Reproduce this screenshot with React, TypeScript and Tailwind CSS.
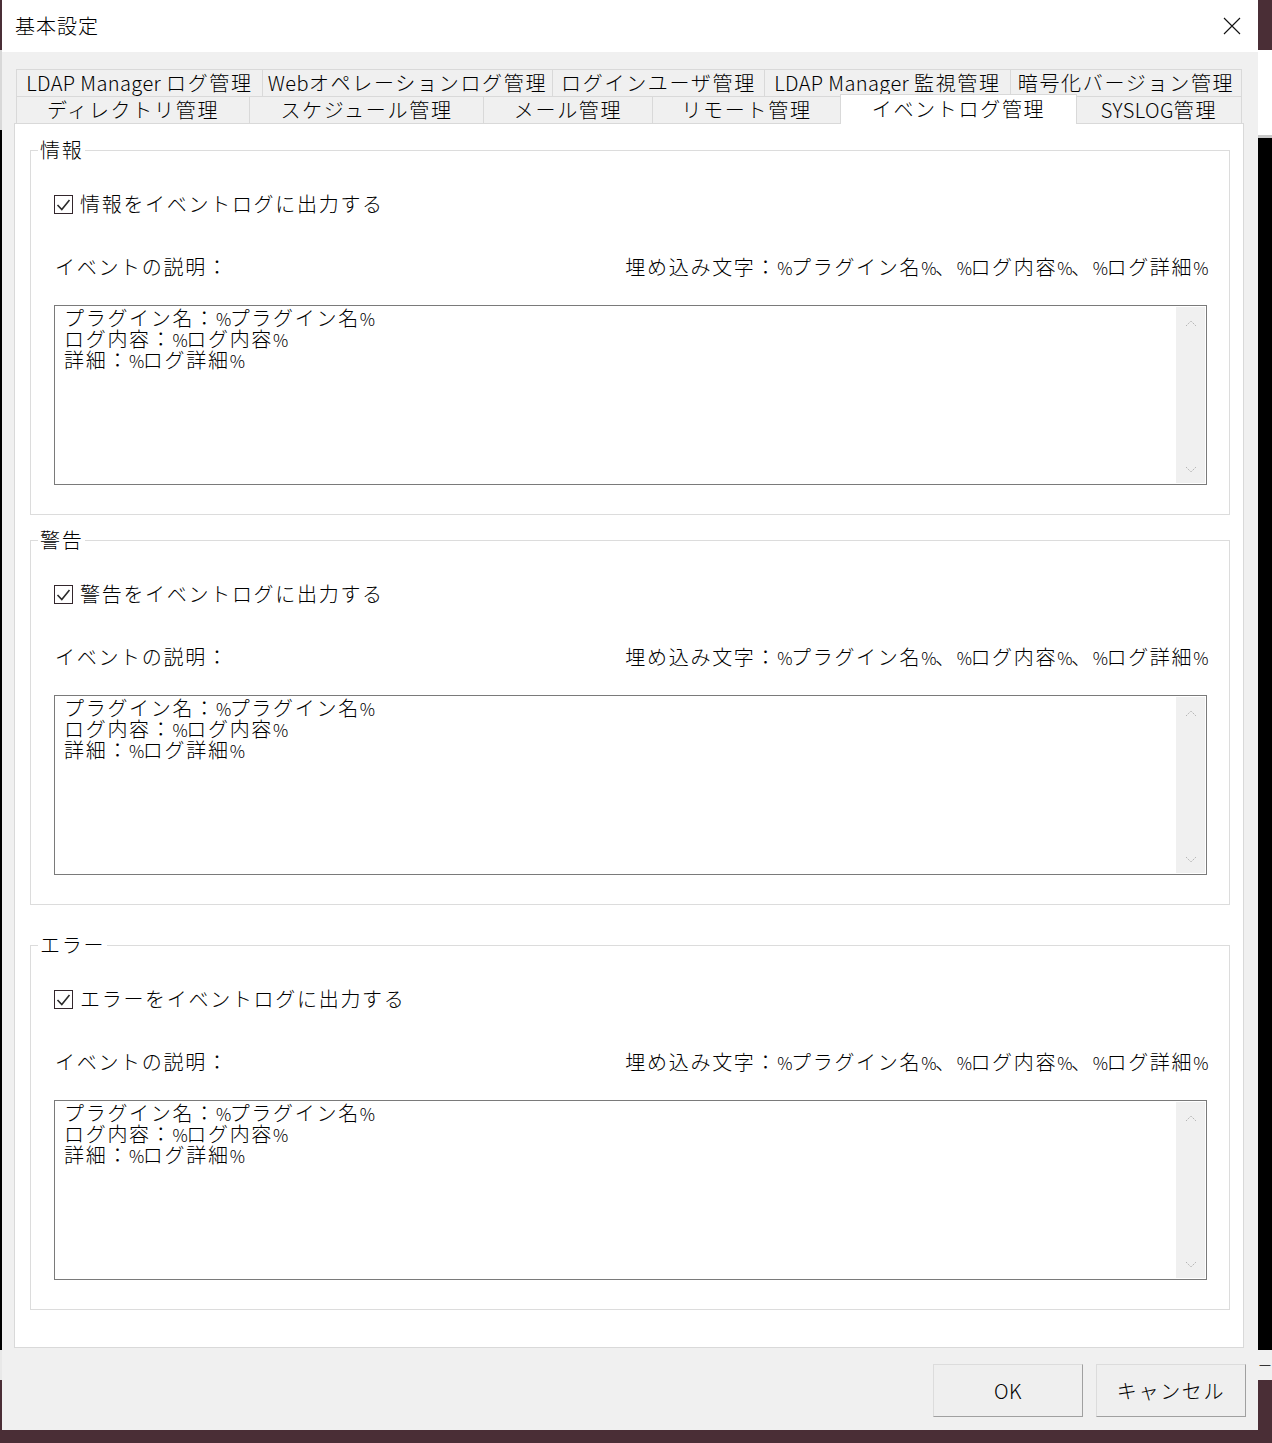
import React from "react";

const ASCII = /([\x20-\x7e]+)/;

// half-width runs: tighter spacing than the full-width glyphs; % is drawn narrow like the dialog font
function T({ s }: { s: string }) {
  return (
    <>
      {s.split(ASCII).map((p, i) =>
        i % 2 === 1 ? (
          <span key={i} className="tracking-[0.4px] whitespace-pre">
            {p.split(/(%)/).map((q, j) =>
              q === "%" ? (
                <span key={j} className="text-[17px] leading-none tracking-[-1.5px]">
                  %
                </span>
              ) : (
                q
              )
            )}
          </span>
        ) : (
          p
        )
      )}
    </>
  );
}

const row1: [string, number][] = [
  ["LDAP Manager ログ管理", 246],
  ["Webオペレーションログ管理", 290],
  ["ログインユーザ管理", 212],
  ["LDAP Manager 監視管理", 246],
  ["暗号化バージョン管理", 232],
];

const row2: [string, number][] = [
  ["ディレクトリ管理", 233],
  ["スケジュール管理", 234],
  ["メール管理", 169],
  ["リモート管理", 188],
  ["イベントログ管理", 237],
  ["SYSLOG管理", 165],
];

const groups = [
  { title: "情報", label: "情報をイベントログに出力する", mt: "mt-0" },
  { title: "警告", label: "警告をイベントログに出力する", mt: "mt-[13px]" },
  { title: "エラー", label: "エラーをイベントログに出力する", mt: "mt-[28px]" },
];

const lines = ["プラグイン名：%プラグイン名%", "ログ内容：%ログ内容%", "詳細：%ログ詳細%"];

function CheckBox() {
  return (
    <div className="w-[19px] h-[19px] border border-[#33262c] bg-white shrink-0">
      <svg width="17" height="17" viewBox="0 0 17 17">
        <path d="M2.5 9 L6.8 13.5 L14.5 4" fill="none" stroke="#2a2a2a" strokeWidth="1.6" />
      </svg>
    </div>
  );
}

function Group({ title, label, mt }: { title: string; label: string; mt: string }) {
  return (
    <fieldset className={`${mt} w-[1200px] border border-[#dcdcdc]`}>
      <legend className="ml-[7px] px-[2px] leading-[24px]">{title}</legend>
      <div className="pt-[32px] pl-[23px] pr-[22px] pb-[29px]">
        <div className="flex items-center gap-[7px] h-[20px]">
          <CheckBox />
          <span className="leading-[20px]">{label}</span>
        </div>
        <div className="mt-[41px] h-[24px] leading-[24px] flex justify-between pl-[1px]">
          <span>イベントの説明：</span>
          <span>
            <T s="埋め込み文字：%プラグイン名%、%ログ内容%、%ログ詳細%" />
          </span>
        </div>
        <div className="mt-[26px] h-[180px] border border-[#7a7a7a] bg-white flex">
          <div className="flex-1 pl-[9px] pt-[1px] leading-[21px]">
            {lines.map((l) => (
              <div key={l}>
                <T s={l} />
              </div>
            ))}
          </div>
          <div className="w-[29px] my-[1px] mr-[1px] bg-[#f0f0f0] flex flex-col items-center justify-between pt-[12px] pb-[9px]">
            <svg width="12" height="8" viewBox="0 0 12 8">
              <path d="M1 7 L6 2 L11 7" fill="none" stroke="#b4b4b4" strokeWidth="1" strokeDasharray="1.5 1" />
            </svg>
            <svg width="12" height="8" viewBox="0 0 12 8">
              <path d="M1 1 L6 6 L11 1" fill="none" stroke="#b4b4b4" strokeWidth="1" strokeDasharray="1.5 1" />
            </svg>
          </div>
        </div>
      </div>
    </fieldset>
  );
}

export default function App() {
  return (
    <div className="w-[1272px] h-[1443px] bg-[#4a2e36] flex items-start overflow-hidden text-black text-[20px] font-light tracking-[1.7px] font-['Noto_Sans_CJK_JP',sans-serif]">
      {/* left edge of the desktop behind */}
      <div className="w-[2px] shrink-0 flex flex-col">
        <div className="h-[50px] bg-[#4a2e36]" />
        <div className="h-[80px] bg-[#d8d8d8]" />
        <div className="h-[1220px] bg-black" />
        <div className="h-[30px] bg-[#e8e8e8]" />
      </div>

      {/* dialog */}
      <div className="w-[1256px] h-[1430px] shrink-0 bg-[#f0f0f0] flex flex-col">
        <div className="h-[52px] bg-white flex items-center justify-between pl-[13px] pr-[17px]">
          <span className="tracking-[1px]">基本設定</span>
          <svg width="18" height="18" viewBox="0 0 18 18">
            <path d="M1 1 L17 17 M17 1 L1 17" stroke="#111" strokeWidth="1.1" />
          </svg>
        </div>

        <div className="pt-[17px] pl-[14px] flex flex-col">
          <div className="flex h-[27px]">
            {row1.map(([t, w], i) => (
              <div
                key={t}
                style={{ width: w }}
                className={`h-[27px] bg-[#f0f0f0] border-t border-l border-[#d9d9d9] ${i === row1.length - 1 ? "border-r" : ""} text-center leading-[26px] whitespace-nowrap`}
              >
                <T s={t} />
              </div>
            ))}
          </div>
          <div className="flex h-[27px]">
            {row2.map(([t, w], i) =>
              i === 4 ? (
                <div
                  key={t}
                  style={{ width: w }}
                  className="relative z-10 -mt-[2px] h-[30px] bg-white border-t border-l border-r border-[#d9d9d9] text-center leading-[28px] whitespace-nowrap"
                >
                  <T s={t} />
                </div>
              ) : (
                <div
                  key={t}
                  style={{ width: w }}
                  className={`h-[27px] bg-[#f0f0f0] border-t border-[#d9d9d9] ${i === 5 ? "border-r" : "border-l"} text-center leading-[26px] whitespace-nowrap`}
                >
                  <T s={t} />
                </div>
              )
            )}
          </div>
        </div>

        <div className="ml-[12px] w-[1230px] bg-white border border-[#d9d9d9] pt-[14px] pl-[15px] pb-[37px]">
          {groups.map((g) => (
            <Group key={g.title} {...g} />
          ))}
        </div>

        <div className="mt-[16px] pr-[12px] flex justify-end gap-[13px]">
          <button className="w-[150px] h-[53px] bg-[#efefef] border border-[#dcdcdc] border-r-[#a0a0a0] border-b-[#a0a0a0] leading-[51px]">
            <T s="OK" />
          </button>
          <button className="w-[150px] h-[53px] bg-[#efefef] border border-[#dcdcdc] border-r-[#a0a0a0] border-b-[#a0a0a0] leading-[51px]">
            キャンセル
          </button>
        </div>
      </div>

      {/* right edge of the desktop behind */}
      <div className="flex-1 min-w-0 overflow-hidden flex flex-col">
        <div className="h-[50px]" />
        <div className="h-[85px] bg-white" />
        <div className="h-[3px] bg-[#c8c8c8]" />
        <div className="h-[1212px] bg-black" />
        <div className="h-[30px] bg-[#f0f0f0] flex items-center text-[14px] leading-[14px] tracking-normal">
          <span>ー</span>
          <div className="w-[2px] h-[14px] bg-black ml-[1px]" />
        </div>
      </div>
    </div>
  );
}
